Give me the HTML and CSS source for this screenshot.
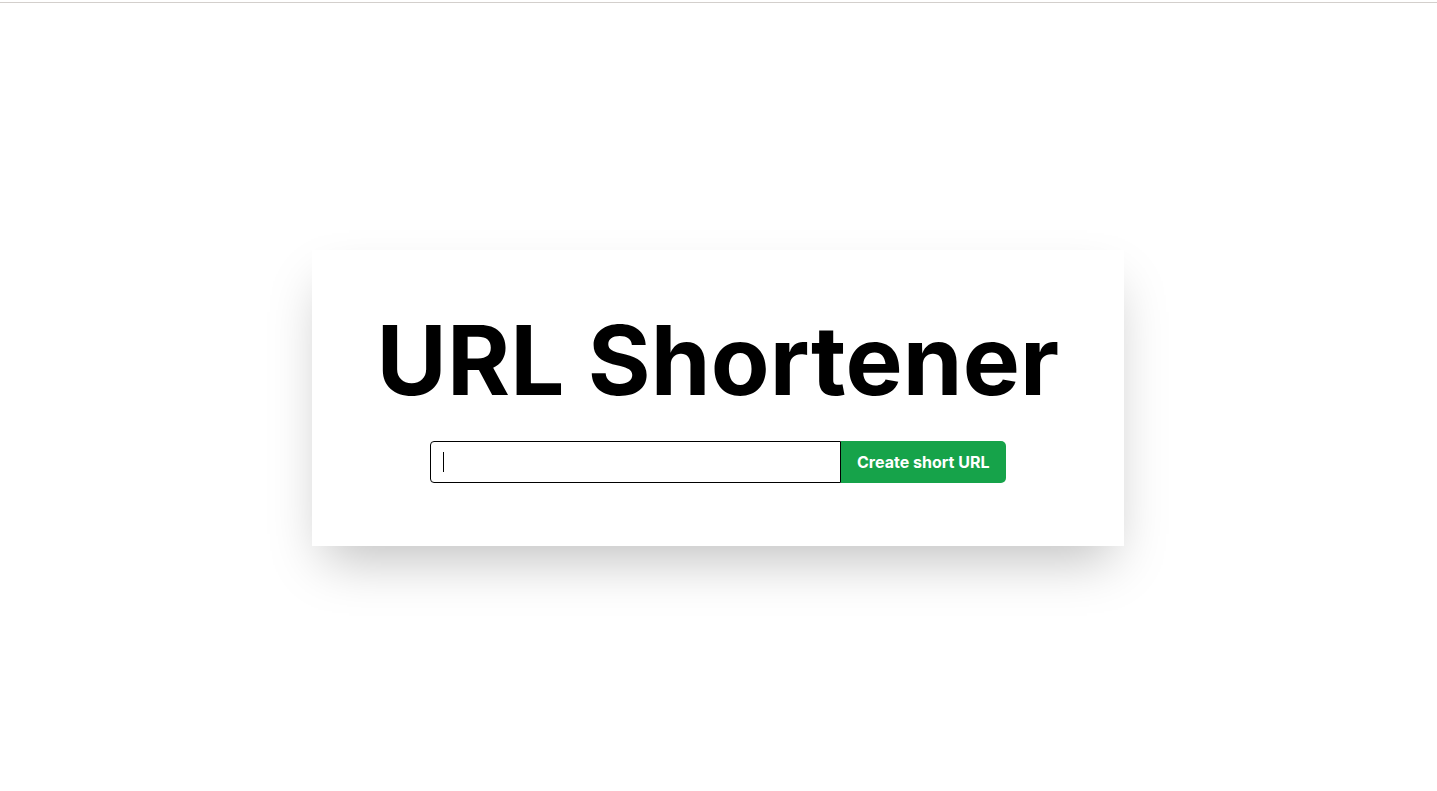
FILE: index.html
```html
<!DOCTYPE html>
<html lang="en">
<head>
<meta charset="utf-8">
<title>URL Shortener</title>
<link rel="stylesheet" href="styles.css">
</head>
<body>
<div class="topline"></div>
<main class="page">
  <section class="card">
    <h1 class="title">URL Shortener</h1>
    <form class="form">
      <label class="field">
        <input class="url-input" type="text" autofocus>
        <span class="caret"></span>
      </label>
      <button class="submit" type="button">Create short URL</button>
    </form>
  </section>
</main>
</body>
</html>
```
FILE: styles.css
```css
* { box-sizing: border-box; }
html, body { margin: 0; padding: 0; background: #fff; }
body {
  font-family: Inter, "Noto Sans", sans-serif;
  color: #000;
  min-height: 100vh;
  display: flex;
  flex-direction: column;
}
.topline {
  height: 3px;
  border-bottom: 1px solid #d3cfcc;
  flex: none;
}
.page {
  flex: 1;
  display: flex;
  align-items: center;
  justify-content: center;
}
.card {
  width: 812px;
  margin: 2px 1px 0 0;
  background: #fff;
  padding: 62px 0 63px;
  display: flex;
  flex-direction: column;
  align-items: center;
  box-shadow: 0 25px 50px -12px rgba(0,0,0,0.25);
}
.title {
  margin: 0 0 33px;
  font-size: 96px;
  line-height: 96px;
  font-weight: 700;
  letter-spacing: 0.2px;
}
.form {
  display: flex;
  width: 576px;
  height: 42px;
  margin: 0;
}
.field {
  flex: 1;
  position: relative;
  display: flex;
}
.url-input {
  flex: 1;
  height: 42px;
  border: 1px solid #000;
  border-radius: 4px 0 0 4px;
  padding: 0 12px;
  font-family: Inter, sans-serif;
  font-size: 16px;
  outline: none;
  caret-color: transparent;
}
.caret {
  position: absolute;
  left: 13px;
  top: 11px;
  width: 1px;
  height: 20px;
  background: #000;
  pointer-events: none;
}
.submit {
  height: 42px;
  width: 165px;
  border: none;
  background: #16a34a;
  color: #fff;
  font-family: Inter, sans-serif;
  font-size: 16px;
  font-weight: 700;
  text-align: left;
  border-radius: 0 5px 5px 0;
  padding: 0 0 0 16px;
}
```
